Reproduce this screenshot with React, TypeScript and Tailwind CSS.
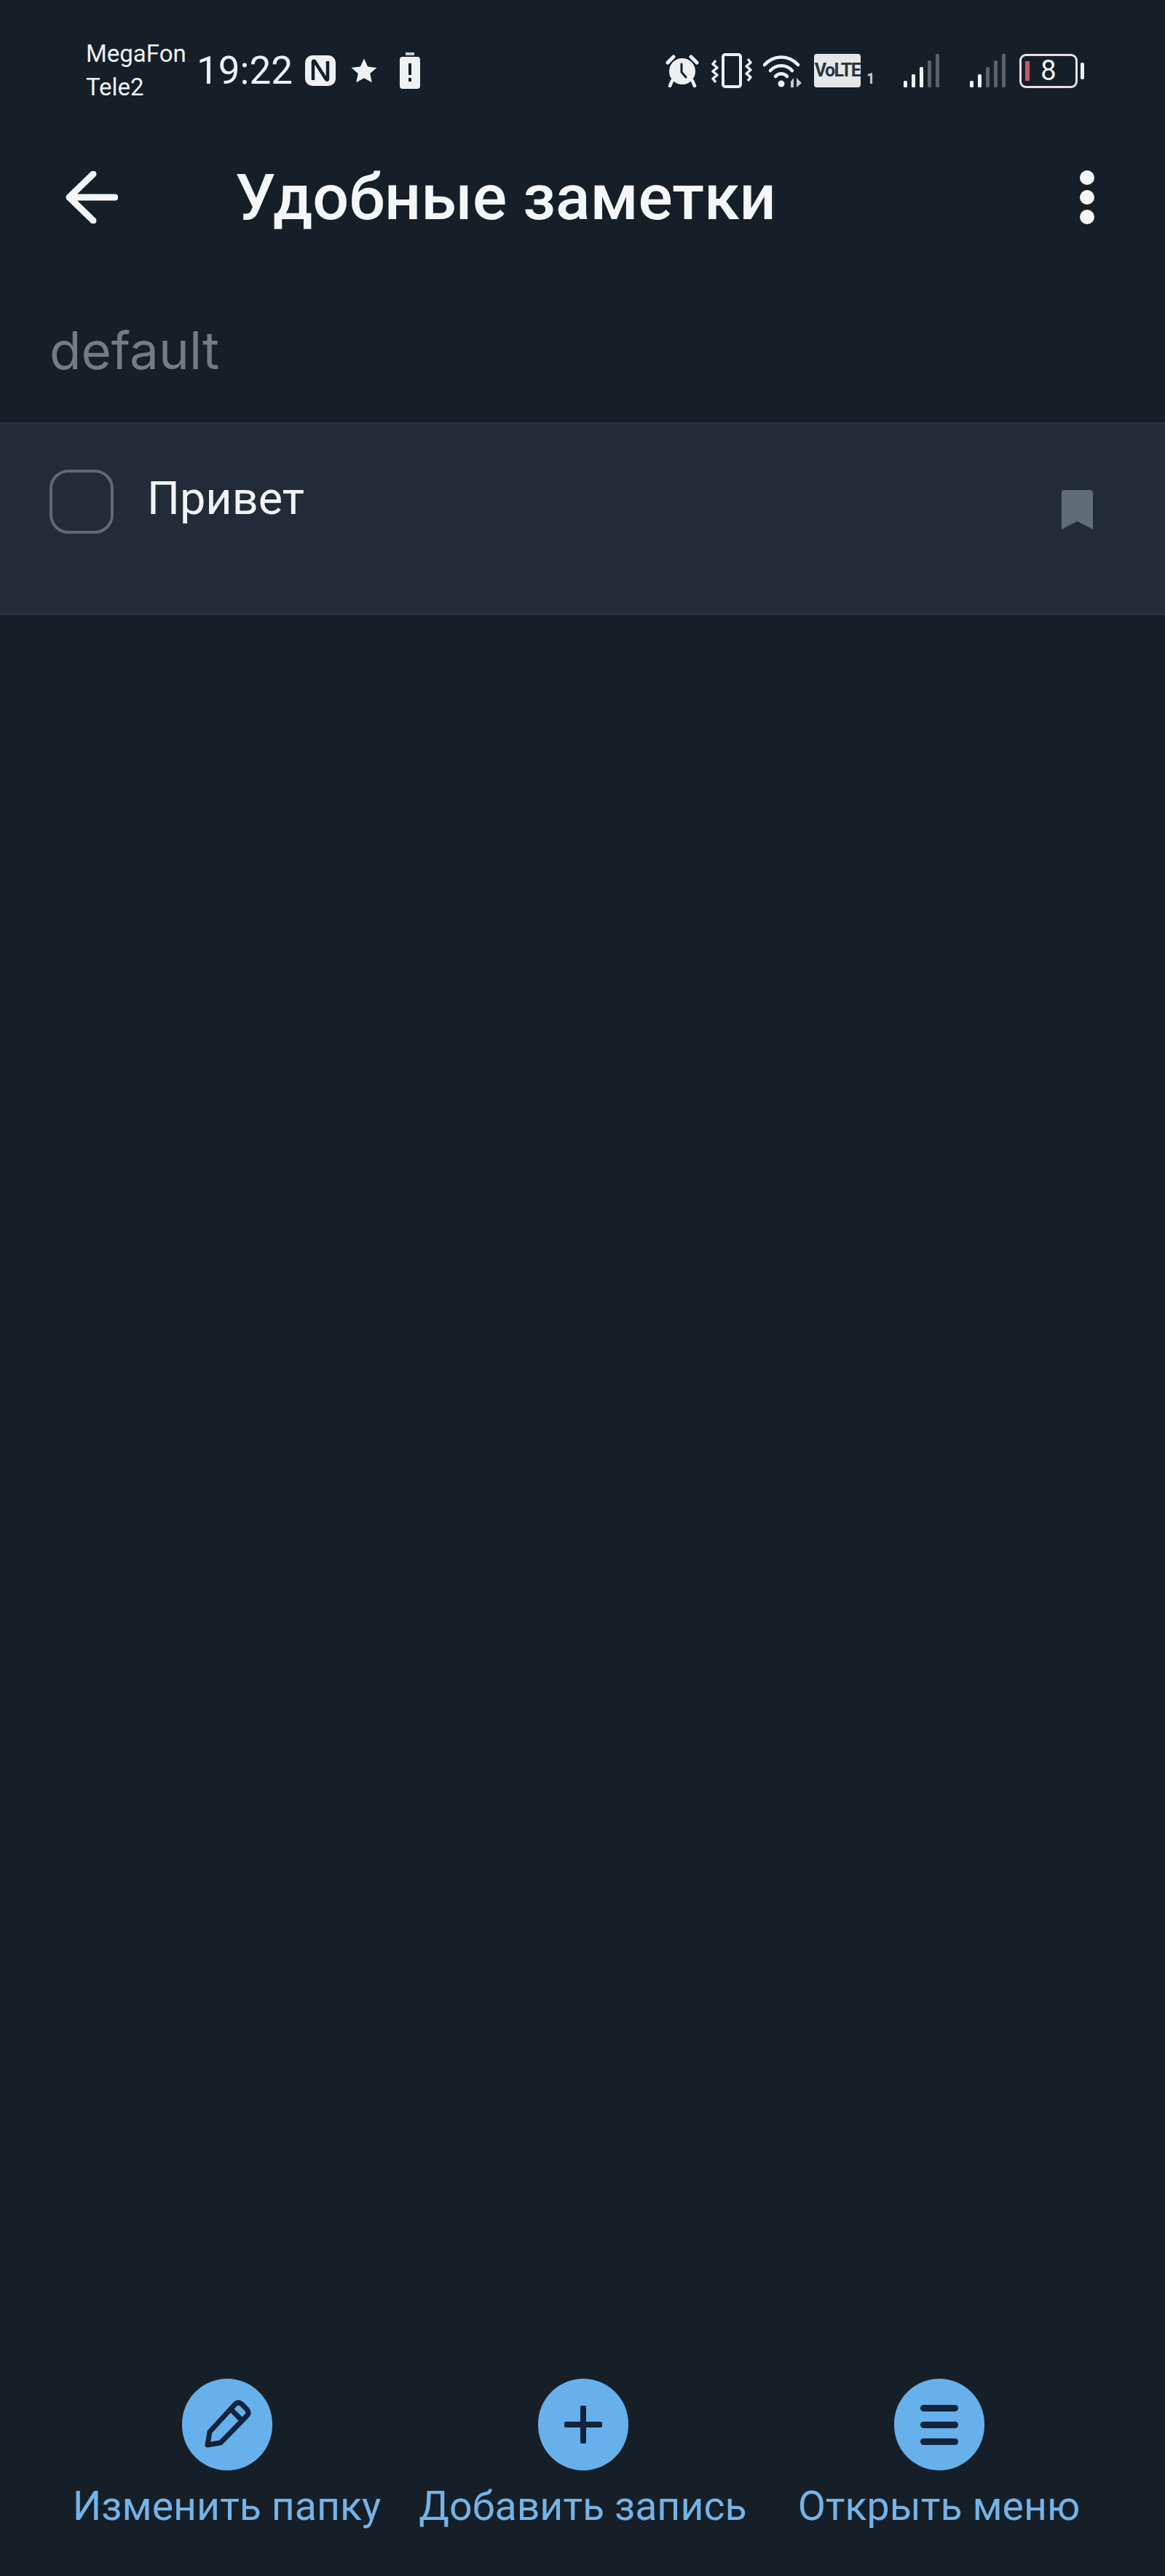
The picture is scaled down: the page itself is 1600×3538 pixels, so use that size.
const BG = 'bg-[#161f27]';

function AlarmIcon() {
  return (
    <svg width="46" height="46" viewBox="0 0 46 46" fill="none">
      <path d="M3 12 L11 4 M43 12 L35 4" stroke="#eef1f3" strokeWidth="5" strokeLinecap="round" />
      <circle cx="23" cy="24" r="18" fill="#eef1f3" />
      <path d="M22 14 V25 L28 32" stroke="#161f27" strokeWidth="3" strokeLinecap="round" />
      <path d="M9 37 L6 44 M37 37 L40 44" stroke="#eef1f3" strokeWidth="4.5" strokeLinecap="round" />
    </svg>
  );
}

function VibrateIcon() {
  return (
    <svg width="56" height="48" viewBox="0 0 56 48" fill="none">
      <rect x="16" y="2" width="24" height="44" rx="3" stroke="#eef1f3" strokeWidth="4" />
      <path d="M6 10 L2 15 L8 20 L2 25 L8 30 L2 35 L6 40" stroke="#eef1f3" strokeWidth="3.5" strokeLinejoin="round" />
      <path d="M50 8 L54 13 L48 18 L54 23 L48 28 L54 33 L50 38" stroke="#eef1f3" strokeWidth="3.5" strokeLinejoin="round" />
    </svg>
  );
}

function WifiIcon() {
  return (
    <svg width="56" height="46" viewBox="0 0 56 46" fill="none">
      <path d="M2 15 C15 1 35 1 48 15" stroke="#eef1f3" strokeWidth="4.5" strokeLinecap="round" />
      <path d="M10 23 C18 14 32 14 40 23" stroke="#eef1f3" strokeWidth="4.5" strokeLinecap="round" />
      <path d="M17 31 C21 26 29 26 33 31" stroke="#eef1f3" strokeWidth="4.5" strokeLinecap="round" />
      <circle cx="25" cy="41" r="4.5" fill="#eef1f3" />
      <path d="M42 33 V46 H38 V38 Z" fill="#c7ccd0" />
      <path d="M46 33 V46 L53 40 Z" fill="#c7ccd0" />
    </svg>
  );
}

// five bars, the unlit ones stay grey
function SignalIcon({ lit }: { lit: number }) {
  const bars = [
    { x: 0, h: 9 },
    { x: 11, h: 18 },
    { x: 22, h: 28 },
    { x: 33, h: 37 },
    { x: 44, h: 46 },
  ];
  return (
    <svg width="49" height="46" viewBox="0 0 49 46">
      {bars.map((b, i) => (
        <rect key={b.x} x={b.x} y={46 - b.h} width="5" height={b.h} rx="1.5" fill={i < lit ? '#f1f3f5' : '#59626b'} />
      ))}
    </svg>
  );
}

function ActionButton({ label, icon }: { label: string; icon: React.ReactNode }) {
  return (
    <div className="flex w-[489px] flex-col items-center">
      <div className="flex h-[126px] w-[124px] items-center justify-center rounded-full bg-[#66b0ec]">{icon}</div>
      <span className="mt-[16px] whitespace-nowrap font-['Roboto',sans-serif] text-[55.5px] leading-[68px] text-[#74b3e8]">{label}</span>
    </div>
  );
}

export default function App() {
  return (
    <div className={`flex h-[3538px] w-[1600px] flex-col overflow-hidden ${BG} font-['Roboto',sans-serif]`}>
      {/* status bar */}
      <div className="flex h-[194px] shrink-0 items-center pl-[118px] pr-[111px] text-[#eef1f3]">
        <div className="flex w-[152px] flex-col text-[33px] leading-[46px]">
          <span>MegaFon</span>
          <span>Tele2</span>
        </div>
        <span className="text-[53px] leading-none">19:22</span>
        <svg width="42" height="42" viewBox="0 0 42 42" className="ml-[17px]">
          <rect width="42" height="42" rx="10" fill="#eef1f3" />
          <path d="M11 34 V9 Q11 7 13 8 L29 33 Q31 35 31 32 V8" fill="none" stroke="#161f27" strokeWidth="4.5" />
        </svg>
        <svg width="38" height="38" viewBox="0 0 24 24" className="ml-[20px]">
          <path d="M12 1.5 L15.2 8.6 L23 9.4 L17.2 14.6 L18.8 22.3 L12 18.4 L5.2 22.3 L6.8 14.6 L1 9.4 L8.8 8.6 Z" fill="#eef1f3" />
        </svg>
        <svg width="28" height="50" viewBox="0 0 28 50" className="ml-[30px]">
          <rect x="8" y="0" width="12" height="4" fill="#c9ced2" />
          <rect x="0" y="6" width="28" height="44" rx="4" fill="#eef1f3" />
          <rect x="12" y="15" width="4" height="16" fill="#161f27" />
          <rect x="12" y="35" width="4" height="5" fill="#161f27" />
        </svg>
        <div className="ml-auto flex items-center">
          <AlarmIcon />
          <div className="ml-[17px]"><VibrateIcon /></div>
          <div className="ml-[15px]"><WifiIcon /></div>
          <div className="ml-[14px] flex h-[46px] w-[64px] items-center justify-center rounded-[4px] bg-[#e4e7ea] text-[25px] font-bold tracking-[-1.5px] text-[#2a333c]">VoLTE</div>
          <span className="ml-[8px] mt-[22px] w-[12px] text-[20px] font-bold leading-none text-[#c9ced2]">1</span>
          <div className="ml-[39px]"><SignalIcon lit={3} /></div>
          <div className="ml-[42px]"><SignalIcon lit={2} /></div>
          <div className="relative ml-[19px] flex h-[47px] w-[80px] items-center justify-center rounded-[9px] border-[3px] border-[#e9dfe1] text-[38px] leading-none text-[#eef1f3]">
            <span className="absolute left-[5px] top-[7px] h-[27px] w-[6px] bg-[#c25a66]" />
            8
          </div>
          <div className="ml-[4px] h-[23px] w-[5px] rounded-[2px] bg-[#eef1f3]" />
        </div>
      </div>

      {/* app bar */}
      <div className="flex h-[154px] shrink-0 items-center pl-[90px] pr-[97px]">
        <svg width="72" height="72" viewBox="0 0 72 72" fill="none">
          <path d="M38 4 L5 36 L38 68 M5 36 H68" stroke="#f4f6f7" strokeWidth="9" strokeLinecap="round" strokeLinejoin="round" />
        </svg>
        <h1 className="ml-[161px] whitespace-nowrap text-[88px] font-medium leading-none text-[#f4f6f7]">Удобные заметки</h1>
        <div className="ml-auto flex flex-col gap-[7px]">
          <span className="h-[20px] w-[20px] rounded-full bg-[#f4f6f7]" />
          <span className="h-[20px] w-[20px] rounded-full bg-[#f4f6f7]" />
          <span className="h-[20px] w-[20px] rounded-full bg-[#f4f6f7]" />
        </div>
      </div>

      {/* folder label */}
      <div className="flex h-[232px] shrink-0 items-start pl-[68px] pt-[90px]">
        <span className="font-['Inter',sans-serif] text-[71px] leading-[86px] text-[#737b83]">default</span>
      </div>

      {/* note row */}
      <div className="flex h-[265px] shrink-0 items-start border-y-2 border-[#28333e] bg-[#212c38] pl-[68px] pr-[99px]">
        <div className="mt-[63px] h-[88px] w-[88px] rounded-[26px] border-[4px] border-[#5d6976]" />
        <span className="ml-[46px] mt-[68px] text-[63px] leading-[70px] text-[#f1f3f5]">Привет</span>
        <svg width="43" height="54" viewBox="0 0 43 54" className="ml-auto mt-[91px]">
          <path d="M4 0 H39 Q43 0 43 4 V54 L21.5 43 L0 54 V4 Q0 0 4 0 Z" fill="#5f6d78" />
        </svg>
      </div>

      <div className="flex-1" />

      {/* bottom actions */}
      <div className="flex h-[271px] shrink-0 items-start pl-[67px]">
        <ActionButton
          label="Изменить папку"
          icon={
            <svg width="66" height="68" viewBox="0 0 66 68" fill="none">
              <path d="M6 62 L9 44 L44 6 Q48 2 53 6 L60 13 Q64 18 60 22 L24 59 Z" stroke="#12233a" strokeWidth="7" strokeLinejoin="round" />
              <path d="M38 13 L54 29" stroke="#12233a" strokeWidth="7" />
            </svg>
          }
        />
        <ActionButton
          label="Добавить запись"
          icon={
            <svg width="52" height="52" viewBox="0 0 52 52" fill="none">
              <path d="M26 3 V49 M3 26 H49" stroke="#12233a" strokeWidth="8" strokeLinecap="round" />
            </svg>
          }
        />
        <ActionButton
          label="Открыть меню"
          icon={
            <div className="flex w-[52px] flex-col gap-[14px]">
              <span className="h-[9px] rounded-full bg-[#12233a]" />
              <span className="h-[9px] rounded-full bg-[#12233a]" />
              <span className="h-[9px] rounded-full bg-[#12233a]" />
            </div>
          }
        />
      </div>
    </div>
  );
}
